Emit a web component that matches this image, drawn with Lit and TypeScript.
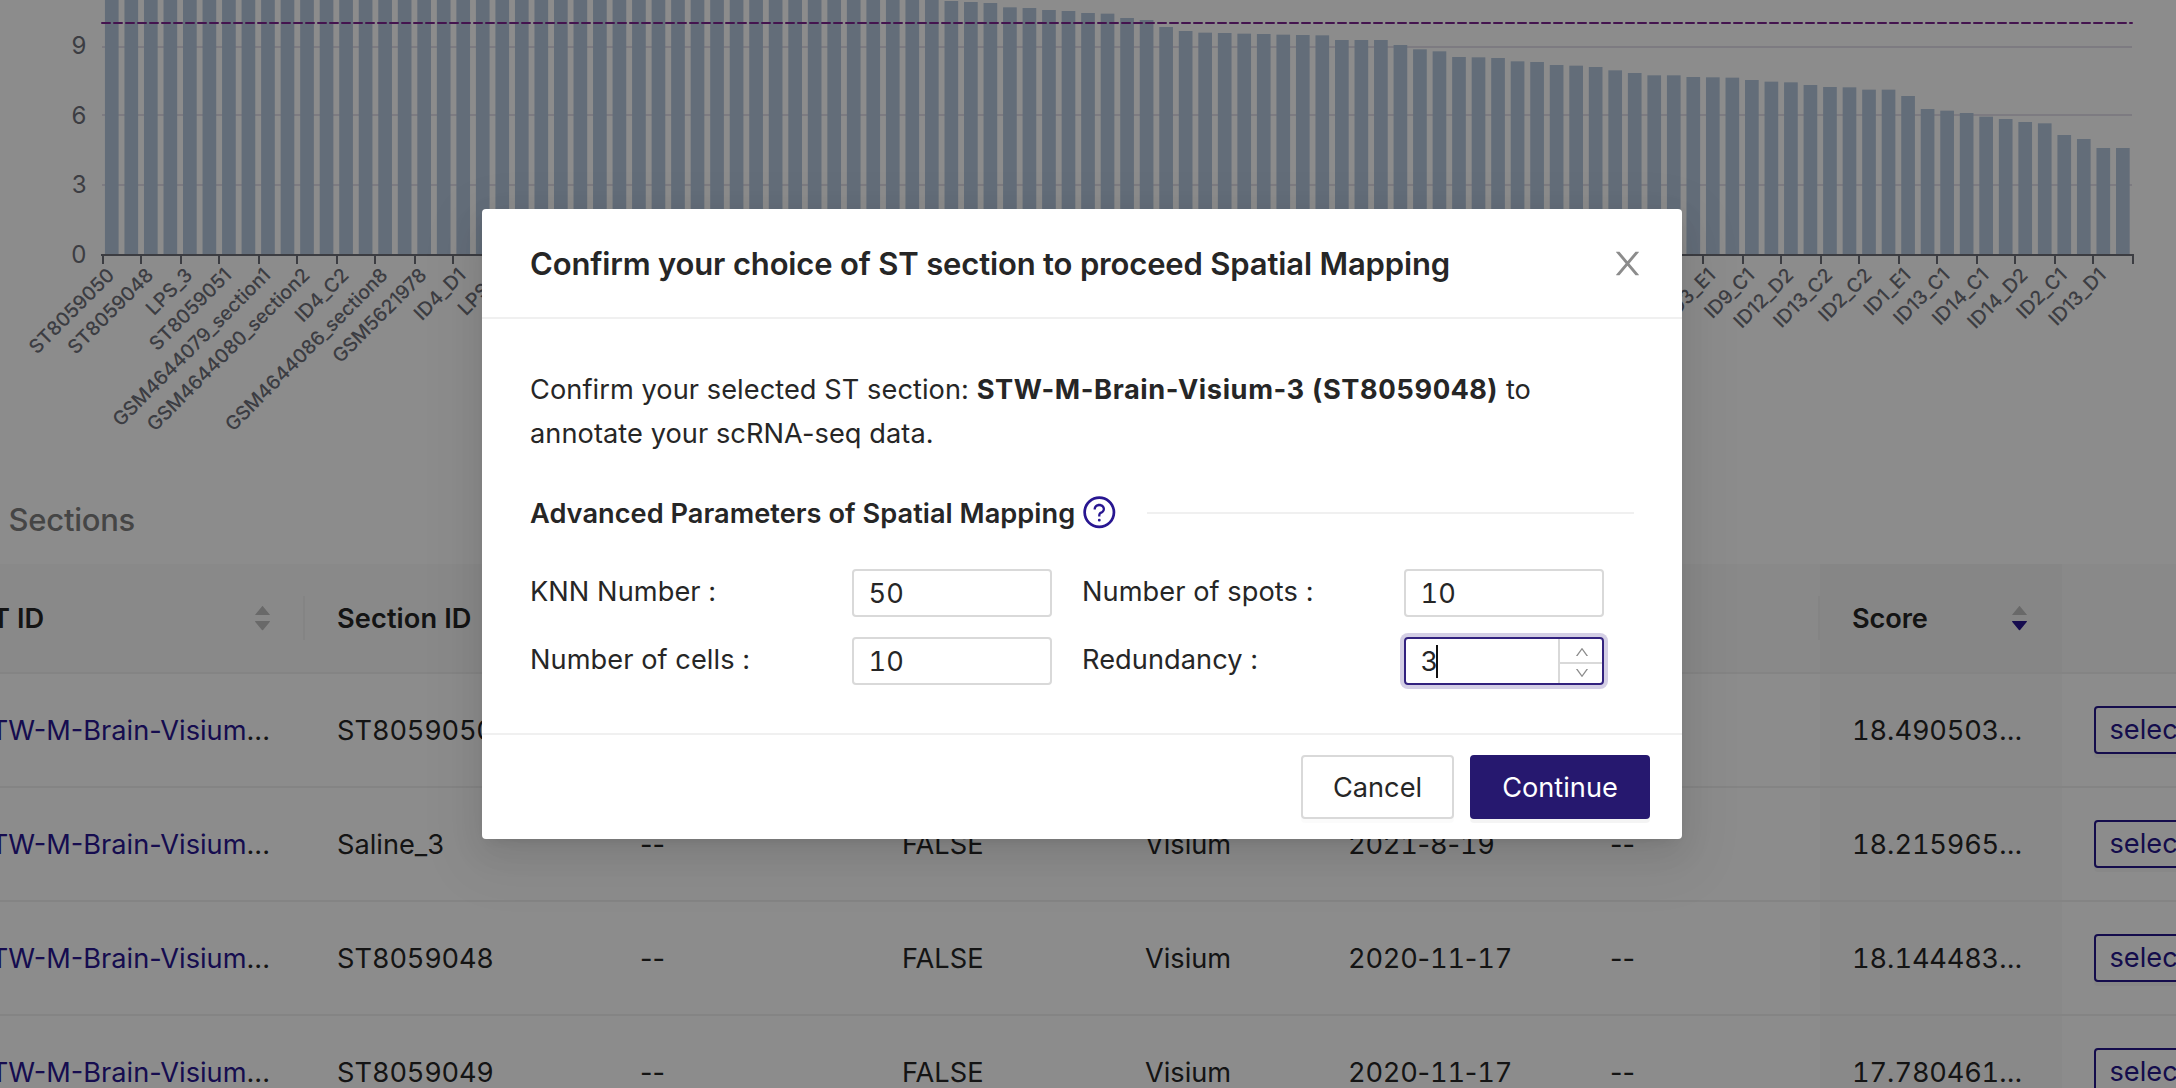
import { LitElement, html, css, svg } from "lit";
import { customElement } from "lit/decorators.js";

/* ---------- chart data ---------- */
const AXIS_X = 102;
const BAND = 19.525;
const BASE_Y = 254;
const BAR_COUNT = 104;
const FIRST_VISIBLE_TOP = 43;
// Top edge of each bar in thirds of a pixel, for the bars that end inside the viewport.
const TOPS = [
  3, 6, 9, 22, 24, 30, 33, 39, 41, 54, 60, 81, 93, 98, 99, 101, 102, 104, 105, 106, 120, 120, 120,
  135, 148, 154, 171, 172, 174, 184, 186, 195, 197, 201, 211, 219, 226, 226, 231, 232, 233, 240,
  245, 247, 255, 261, 262, 269, 269, 288, 327, 332, 339, 350, 357, 366, 370, 405, 417, 444, 444,
];
const LABELS: Array<[number, string]> = [
  [0, "ST8059050"], [1, "ST8059048"], [2, "LPS_3"], [3, "ST8059051"],
  [4, "GSM4644079_section1"], [5, "GSM4644080_section2"], [6, "ID4_C2"],
  [7, "GSM4644086_section8"], [8, "GSM5621978"], [9, "ID4_D1"], [10, "LPS_2"], [11, "Saline_2"],
  [41, "ID3_E1"], [42, "ID9_C1"], [43, "ID12_D2"], [44, "ID13_C2"], [45, "ID2_C2"],
  [46, "ID1_E1"], [47, "ID13_C1"], [48, "ID14_C1"], [49, "ID14_D2"], [50, "ID2_C1"], [51, "ID13_D1"],
];

@customElement("score-chart")
class ScoreChart extends LitElement {
  static styles = css`
    :host { display: block; height: 440px; }
    svg { display: block; }
    .bar { fill: #b4c6dc; }
    .grid { stroke: #e3e1ec; stroke-width: 2; }
    .axis { stroke: #6e7079; stroke-width: 2; stroke-linecap: square; }
    .tick { stroke: #6e7079; stroke-width: 2; }
    .limit { stroke: #7d2590; stroke-width: 2; stroke-dasharray: 8 4; stroke-linecap: round; }
    .value { font-size: 24px; fill: #6e7079; text-anchor: end; }
    .name { font-size: 19.4px; font-weight: 450; fill: #6e7079; text-anchor: end; }
  `;

  render() {
    const bars = Array.from({ length: BAR_COUNT }, (_, i) => {
      const top = i < FIRST_VISIBLE_TOP ? -10 : TOPS[i - FIRST_VISIBLE_TOP] / 3;
      return svg`<rect class="bar" x=${AXIS_X + i * BAND + BAND * 0.15} y=${top}
        width=${BAND * 0.7} height=${BASE_Y - top}></rect>`;
    });
    const ticks = Array.from({ length: BAR_COUNT / 2 + 1 }, (_, k) => {
      const x = 2 * Math.floor((AXIS_X + k * 2 * BAND) / 2) + 1;
      return svg`<line class="tick" x1=${x} x2=${x} y1="255" y2="264"></line>`;
    });
    return html`<svg width="2176" height="440" viewBox="0 0 2176 440">
      ${[47, 115, 185].map((y) => svg`<line class="grid" x1="102" x2="2132" y1=${y} y2=${y}></line>`)}
      ${bars}
      <line class="axis" x1="102" x2="2133" y1="255" y2="255"></line>
      ${ticks}
      <line class="limit" x1="102" x2="2132" y1="23" y2="23"></line>
      <text class="value" x="86.5" y="54">9</text>
      <text class="value" x="86.5" y="124">6</text>
      <text class="value" x="86.5" y="193">3</text>
      <text class="value" x="86.5" y="263">0</text>
      ${LABELS.map(([k, name]) => {
        const x = AXIS_X + k * 2 * BAND + 13.6;
        return svg`<text class="name" transform="translate(${x} 276.4) rotate(-45)">${name}</text>`;
      })}
    </svg>`;
  }
}

/* ---------- table ---------- */
const ROWS = [
  ["ST8059050", "", "", "", "", "", "18.490503..."],
  ["Saline_3", "--", "FALSE", "Visium", "2021-8-19", "--", "18.215965..."],
  ["ST8059048", "--", "FALSE", "Visium", "2020-11-17", "--", "18.144483..."],
  ["ST8059049", "--", "FALSE", "Visium", "2020-11-17", "--", "17.780461..."],
];

// Tabular figures for digit runs only, so that hyphens keep their proportional width.
const figures = css`
  .num { font-variant-numeric: tabular-nums; }
`;
const tabular = (text: string) =>
  text.split(/(\d+)/).map((part) => (/^\d/.test(part) ? html`<span class="num">${part}</span>` : part));

@customElement("section-table")
class SectionTable extends LitElement {
  static styles = [figures, css`
    :host { display: block; color: #262626; font-size: 27.2px; }
    .title { height: 124px; box-sizing: border-box; padding: 60px 0 0 8.5px; line-height: 40px;
      font-size: 31px; font-weight: 500; color: #7f7f7f; letter-spacing: -0.25px; }
    .row { display: grid; grid-template-columns: 305px 303px 262px 243px 203px 262px 242px 242px 1fr;
      height: 114px; box-sizing: border-box; border-bottom: 2px solid #f0f0f0; }
    .cell { display: flex; align-items: center; padding: 0 32px; white-space: nowrap; min-width: 0;
      border-bottom: 2px solid #f0f0f0; margin-bottom: -2px; overflow: hidden; }
    .head { height: 110px; background: #fafafa; font-weight: 560; letter-spacing: 0.1px; }
    .head .cell { justify-content: space-between; }
    .first { justify-content: flex-end; padding-right: 35px; }
    .head .ruled { padding-right: 0; }
    .head .first { padding-left: 0; }
    .rule { width: 2px; height: 44px; background: #f0f0f0; margin-left: 33px; }
    .cut { margin: 0 auto 0 -8px; }
    .num { letter-spacing: -0.25px; }
    .sorted { background: #fafafa; }
    .head .sorted { background: #f4f4f4; letter-spacing: -0.1px; padding-right: 35px; }
    .link { color: #281691; }
    .sorter { display: flex; flex-direction: column; gap: 6px; }
    .sorter svg { display: block; width: 15px; height: 9.5px; fill: #bfbfbf; }
    .sorter .on { fill: #281691; }
    .down { transform: scaleY(-1); }
    .pick { flex: none; height: 48px; box-sizing: border-box; padding: 0 13.5px; line-height: 44px;
      border: 2px solid #26168a; border-radius: 4px; background: #fff; color: #26168a;
      box-shadow: 0 4px 0 rgba(0, 0, 0, 0.03); }
    .action { overflow: visible; }
  `];

  sorter(active: boolean) {
    const d = "M858.9 689L530.5 308.2c-9.4-10.9-27.5-10.9-37 0L165.1 689c-12.2 14.2-1.2 35 18.5 35h656.8c19.7 0 30.7-20.8 18.5-35z";
    return html`<span class="sorter">
      <svg viewBox="160 300 704 424" preserveAspectRatio="none"><path d=${d}></path></svg>
      <svg class="down ${active ? "on" : ""}" viewBox="160 300 704 424" preserveAspectRatio="none"><path d=${d}></path></svg>
    </span>`;
  }

  render() {
    return html`
      <div class="title">Sections</div>
      <div class="row head">
        <div class="cell first ruled"><span class="cut">T ID</span>${this.sorter(false)}<span class="rule"></span></div>
        <div class="cell">Section ID</div>
        <div class="cell"></div><div class="cell"></div><div class="cell"></div><div class="cell"></div>
        <div class="cell ruled"><span></span><span class="rule"></span></div>
        <div class="cell sorted">Score${this.sorter(true)}</div>
        <div class="cell"></div>
      </div>
      ${ROWS.map((r) => html`<div class="row">
        <div class="cell first"><span class="link">STW-M-Brain-Visium</span>...</div>
        ${r.map((t, i) => html`<div class="cell ${i === 6 ? "sorted" : ""}"><span>${tabular(t)}</span></div>`)}
        <div class="cell action"><span class="pick">select</span></div>
      </div>`)}
    `;
  }
}

/* ---------- dialog ---------- */
@customElement("confirm-dialog")
class ConfirmDialog extends LitElement {
  static styles = [figures, css`
    :host { display: flex; flex-direction: column; width: 1200px; height: 630px; box-sizing: border-box;
      background: #fff; border-radius: 4px; color: #262626; font-size: 27.2px;
      box-shadow: 0 6px 12px -8px rgba(0,0,0,.12), 0 12px 32px rgba(0,0,0,.08), 0 18px 56px 16px rgba(0,0,0,.05); }
    .header { display: flex; align-items: center; justify-content: space-between; height: 110px;
      box-sizing: border-box; padding: 0 36px 0 48px; border-bottom: 2px solid #f0f0f0; }
    .title { font-size: 31px; font-weight: 560; letter-spacing: -0.16px; white-space: nowrap; }
    .close { width: 37px; height: 37px; fill: #8c8c8c; }
    .body { flex: 1; padding: 49px 48px 0; }
    .text { line-height: 44px; letter-spacing: 0.06px; white-space: nowrap; }
    .text b { font-weight: 700; letter-spacing: 0.6px; }
    .divider { display: flex; align-items: center; margin-top: 37px; height: 40px; font-weight: 560;
      letter-spacing: 0.03px; white-space: nowrap; }
    .help { width: 36.6px; height: 36.6px; fill: #281691; margin: -2px 0 0 5.5px; }
    .line { flex: 1; height: 2px; background: #f0f0f0; margin: -1px 0 0 30px; }
    .form { display: grid; grid-template-columns: 552px 552px; row-gap: 20px; margin-top: 36px; }
    .field { display: flex; align-items: center; height: 48px; }
    .label { width: 322px; padding-bottom: 3px; letter-spacing: 0.06px; white-space: nowrap; }
    .input { display: flex; align-items: center; width: 200px; height: 48px; box-sizing: border-box;
      border: 2px solid #d9d9d9; border-radius: 4px; padding-left: 14.5px; }
    .focus { border-color: #33227f; box-shadow: 0 0 0 4px #d4cfe5; }
    .caret { width: 2px; height: 33px; background: #111; margin-left: -2px; }
    .steps { display: flex; flex-direction: column; width: 42px; height: 44px; margin-left: auto; border-left: 2px solid #d9d9d9; }
    .step { flex: 1; display: flex; align-items: center; justify-content: center; padding: 3px 0 0 1px; }
    .step + .step { border-top: 2px solid #d9d9d9; padding-top: 0; }
    .step svg { width: 16px; height: 16px; fill: #8c8c8c; }
    .footer { display: flex; justify-content: flex-end; gap: 16px; padding: 20px 32px; border-top: 2px solid #f0f0f0; }
    .btn { display: flex; align-items: center; justify-content: center; width: 153px; height: 64px; box-sizing: border-box;
      border: 2px solid #d9d9d9; border-radius: 4px; box-shadow: 0 4px 0 rgba(0,0,0,.016); padding-top: 1px; }
    .primary { width: 180px; background: #26186f; border-color: #26186f; color: #fff; box-shadow: 0 4px 0 rgba(0,0,0,.045); }
  `];

  field(label: string, value: string, focused = false) {
    return html`<div class="field">
      <span class="label">${label} :</span>
      <span class="input ${focused ? "focus" : ""}"><span class="num">${value}</span>${focused
        ? html`<i class="caret"></i><span class="steps">
            <span class="step"><svg viewBox="0 0 1024 1024"><path d="M890.5 755.3L537.9 269.2c-12.8-17.6-39-17.6-51.7 0L133.5 755.3A8 8 0 0 0 140 768h75c5.1 0 9.9-2.5 12.9-6.6L512 369.8l284.1 391.6c3 4.1 7.8 6.6 12.9 6.6h75c6.5 0 10.3-7.4 6.5-12.7z"></path></svg></span>
            <span class="step"><svg viewBox="0 0 1024 1024"><path d="M884 256h-75c-5.1 0-9.9 2.5-12.9 6.6L512 654.2 227.9 262.6c-3-4.1-7.8-6.6-12.9-6.6h-75c-6.5 0-10.3 7.4-6.5 12.7l352.6 486.1c12.8 17.6 39 17.6 51.7 0l352.6-486.1c3.9-5.3.1-12.7-6.4-12.7z"></path></svg></span>
          </span>`
        : ""}</span>
    </div>`;
  }

  render() {
    return html`
      <div class="header">
        <span class="title">Confirm your choice of ST section to proceed Spatial Mapping</span>
        <svg class="close" viewBox="0 0 1024 1024"><path d="M563.8 512l262.5-312.9c4.4-5.2.7-13.1-6.1-13.1h-79.8c-4.7 0-9.2 2.1-12.3 5.7L511.6 449.8 295.1 191.7c-3-3.6-7.5-5.7-12.3-5.7H203c-6.8 0-10.5 7.9-6.1 13.1L459.4 512 196.9 824.9A7.95 7.95 0 0 0 203 838h79.8c4.7 0 9.2-2.1 12.3-5.7l216.5-258.1 216.5 258.1c3 3.6 7.5 5.7 12.3 5.7h79.8c6.8 0 10.5-7.9 6.1-13.1L563.8 512z"></path></svg>
      </div>
      <div class="body">
        <div class="text">Confirm your selected ST section: <b>${tabular("STW-M-Brain-Visium-3 (ST8059048)")}</b> to<br>annotate your scRNA-seq data.</div>
        <div class="divider">Advanced Parameters of Spatial Mapping
          <svg class="help" viewBox="0 0 1024 1024"><path d="M512 64C264.6 64 64 264.6 64 512s200.6 448 448 448 448-200.6 448-448S759.4 64 512 64zm0 820c-205.4 0-372-166.6-372-372s166.6-372 372-372 372 166.6 372 372-166.6 372-372 372z"></path><path d="M623.6 316.7C593.6 290.4 554 276 512 276s-81.6 14.5-111.6 40.7C369.2 344 352 380.7 352 420v7.6c0 4.4 3.6 8 8 8h48c4.4 0 8-3.6 8-8V420c0-44.1 43.1-80 96-80s96 35.9 96 80c0 31.1-22 59.6-56.1 72.7-21.2 8.1-39.2 22.3-52.1 40.9-13.1 19-19.9 41.8-19.9 64.9V620c0 4.4 3.6 8 8 8h48c4.4 0 8-3.6 8-8v-22.7a48.3 48.3 0 0 1 30.9-44.8c59-22.7 97.1-74.7 97.1-132.5.1-39.3-17.1-76-48.3-103.3zM472 732a40 40 0 1 0 80 0 40 40 0 1 0-80 0z"></path></svg>
          <span class="line"></span>
        </div>
        <div class="form">
          ${this.field("KNN Number", "50")}
          ${this.field("Number of spots", "10")}
          ${this.field("Number of cells", "10")}
          ${this.field("Redundancy", "3", true)}
        </div>
      </div>
      <div class="footer"><span class="btn">Cancel</span><span class="btn primary">Continue</span></div>
    `;
  }
}

@customElement("app-root")
class AppRoot extends LitElement {
  static styles = css`
    :host { display: block; position: relative; width: 2176px; height: 1088px; overflow: hidden;
      background: #fff; font-family: Inter, "Liberation Sans", sans-serif; }
    .mask { position: absolute; inset: 0; display: flex; justify-content: center; align-items: flex-start;
      box-sizing: border-box; padding: 209px 12px 0 0; background: rgba(0, 0, 0, 0.45); }
  `;

  render() {
    return html`
      <score-chart></score-chart>
      <section-table></section-table>
      <div class="mask"><confirm-dialog></confirm-dialog></div>
    `;
  }
}
